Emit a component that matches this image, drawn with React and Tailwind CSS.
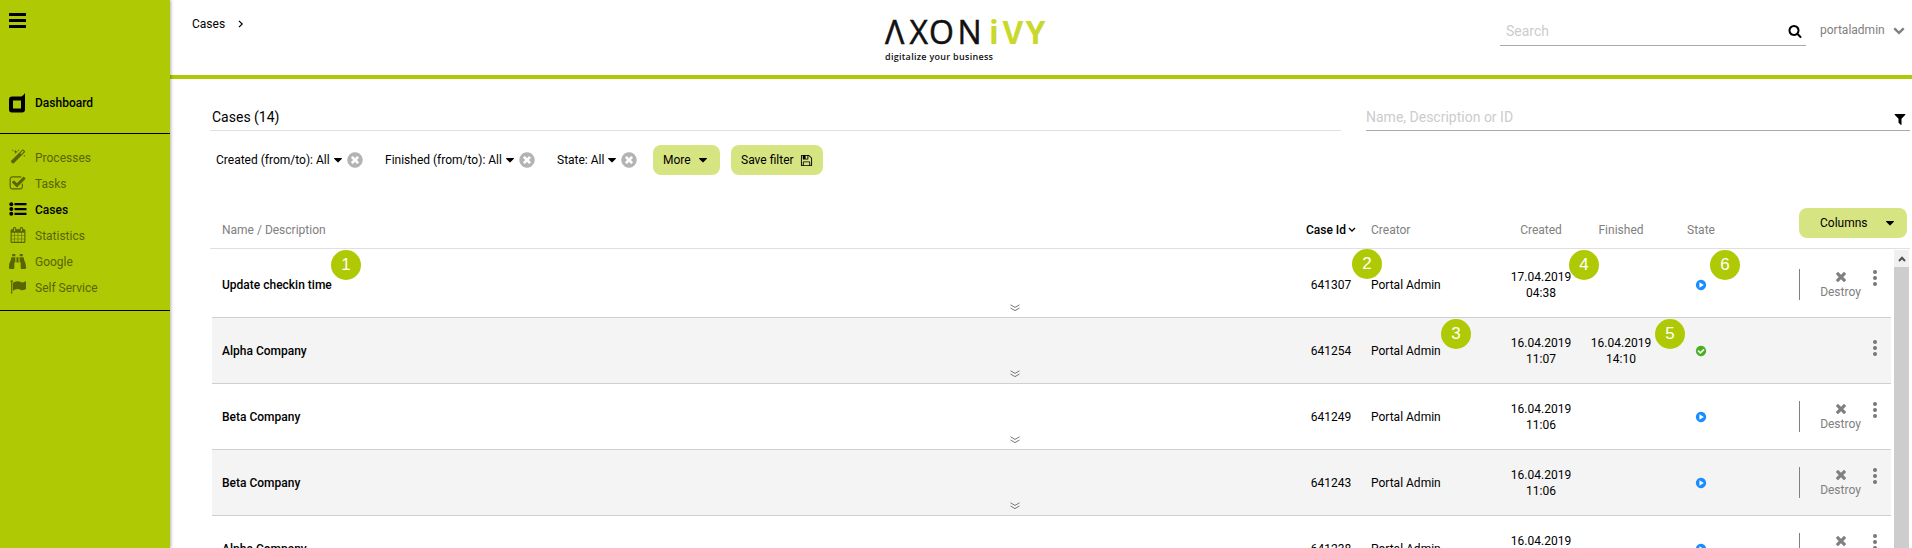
import React from "react";
import { FaBinoculars } from "react-icons/fa";

const CIRCLE =
  "M1664 896q0 209-103 385.5t-279.5 279.5-385.5 103-385.5-103-279.5-279.5-103-385.5 103-385.5 279.5-279.5 385.5-103 385.5 103 279.5 279.5 103 385.5z";

const PATHS = {
  check:
    "M1472 930v318q0 119-84.5 203.5t-203.5 84.5h-832q-119 0-203.5-84.5t-84.5-203.5v-832q0-119 84.5-203.5t203.5-84.5h832q63 0 117 25 15 7 18 23 3 17-9 29l-49 49q-10 10-23 10-3 0-9-2-23-6-45-6h-832q-66 0-113 47t-47 113v832q0 66 47 113t113 47h832q66 0 113-47t47-113v-254q0-13 9-22l64-64q10-10 23-10 6 0 12 3 20 8 20 29zm231-489l-814 814q-24 24-57 24t-57-24l-430-430q-24-24-24-57t24-57l110-110q24-24 57-24t57 24l263 263 647-647q24-24 57-24t57 24l110 110q24 24 24 57t-24 57z",
  calendar:
    "M192 1664h288v-288h-288v288zm352 0h320v-288h-320v288zm-352-352h288v-320h-288v320zm352 0h320v-320h-320v320zm-352-384h288v-288h-288v288zm736 736h320v-288h-320v288zm-384-736h320v-288h-320v288zm768 736h288v-288h-288v288zm-384-352h320v-320h-320v320zm-352-864v-288q0-13-9.5-22.5t-22.5-9.5h-64q-13 0-22.5 9.5t-9.5 22.5v288q0 13 9.5 22.5t22.5 9.5h64q13 0 22.5-9.5t9.5-22.5zm736 864h288v-320h-288v320zm-384-384h320v-288h-320v288zm384 0h288v-288h-288v288zm32-480v-288q0-13-9.5-22.5t-22.5-9.5h-64q-13 0-22.5 9.5t-9.5 22.5v288q0 13 9.5 22.5t22.5 9.5h64q13 0 22.5-9.5t9.5-22.5zm384-64v1280q0 52-38 90t-90 38h-1408q-52 0-90-38t-38-90v-1280q0-52 38-90t90-38h128v-96q0-66 47-113t113-47h64q66 0 113 47t47 113v96h384v-96q0-66 47-113t113-47h64q66 0 113 47t47 113v96h128q52 0 90 38t38 90z",
  times:
    "M1490 1322q0 40-28 68l-136 136q-28 28-68 28t-68-28l-294-294-294 294q-28 28-68 28t-68-28l-136-136q-28-28-28-68t28-68l294-294-294-294q-28-28-28-68t28-68l136-136q28-28 68-28t68 28l294 294 294-294q28-28 68-28t68 28l136 136q28 28 28 68t-28 68l-294 294 294 294q28 28 28 68z",
  timesCircle:
    "M1277 1122q0-26-19-45l-181-181 181-181q19-19 19-45 0-27-19-46l-90-90q-19-19-46-19-26 0-45 19l-181 181-181-181q-19-19-45-19-27 0-46 19l-90 90q-19 19-19 46 0 26 19 45l181 181-181 181q-19 19-19 45 0 27 19 46l90 90q19 19 46 19 26 0 45-19l181-181 181 181q19 19 45 19 27 0 46-19l90-90q19-19 19-46z" + CIRCLE,
  checkCircle:
    "M1412 734q0-28-18-46l-91-90q-19-19-45-19t-45 19l-408 407-226-226q-19-19-45-19t-45 19l-91 90q-18 18-18 46 0 27 18 45l362 362q19 19 45 19 27 0 46-19l543-543q18-18 18-45z" + CIRCLE,
  playCircle: "M660 480l660 416-660 416z" + CIRCLE,
  search:
    "M1216 832q0-185-131.5-316.5t-316.5-131.5-316.5 131.5-131.5 316.5 131.5 316.5 316.5 131.5 316.5-131.5 131.5-316.5zm512 832q0 52-38 90t-90 38q-54 0-90-38l-343-342q-179 124-399 124-143 0-273.5-55.5t-225-150-150-225-55.5-273.5 55.5-273.5 150-225 225-150 273.5-55.5 273.5 55.5 225 150 150 225 55.5 273.5q0 220-124 399l343 343q37 37 37 90z",
  filter:
    "M1595 295q17 41-14 70l-493 493v742q0 42-39 59-13 5-25 5-27 0-45-19l-256-256q-19-19-19-45v-486l-493-493q-31-29-14-70 17-39 59-39h1280q42 0 59 39z",
  floppy:
    "M512 1536h768v-384h-768v384zm896 0h128v-896q0-14-10-38.5t-20-34.5l-281-281q-10-10-34-20t-39-10v416q0 40-28 68t-68 28h-576q-40 0-68-28t-28-68v-416h-128v1280h128v-416q0-40 28-68t68-28h832q40 0 68 28t28 68v416zm-384-928v-320q0-13-9.5-22.5t-22.5-9.5h-192q-13 0-22.5 9.5t-9.5 22.5v320q0 13 9.5 22.5t22.5 9.5h192q13 0 22.5-9.5t9.5-22.5zm640 32v928q0 40-28 68t-68 28h-1344q-40 0-68-28t-28-68v-1344q0-40 28-68t68-28h928q40 0 88 20t76 48l280 280q28 28 48 76t20 88z",
  chevronDown:
    "M1683 808l-742 741q-19 19-45 19t-45-19l-742-741q-19-19-19-45.5t19-45.5l166-165q19-19 45-19t45 19l531 531 531-531q19-19 45-19t45 19l166 165q19 19 19 45.5t-19 45.5z",
  caret:
    "M1408 704q0 26-19 45l-448 448q-19 19-45 19t-45-19l-448-448q-19-19-19-45t19-45 45-19h896q26 0 45 19t19 45z",
  magic:
    "M1254 581l293-293-107-107-293 293zm447-293q0 27-18 45l-1286 1286q-18 18-45 18t-45-18l-198-198q-18-18-18-45t18-45l1286-1286q18-18 45-18t45 18l198 198q18 18 18 45zm-1351-190l98 30-98 30-30 98-30-98-98-30 98-30 30-98zm350 162l196 60-196 60-60 196-60-196-196-60 196-60 60-196zm930 478l98 30-98 30-30 98-30-98-98-30 98-30 30-98zm-640-640l98 30-98 30-30 98-30-98-98-30 98-30 30-98z",
  flag:
    "M320 256q0 72-64 110v1266q0 13-9.5 22.5t-22.5 9.5h-64q-13 0-22.5-9.5t-9.5-22.5v-1266q-64-38-64-110 0-53 37.5-90.5t90.5-37.5 90.5 37.5 37.5 90.5zm1472 64v763q0 25-12.5 38.5t-39.5 27.5q-215 116-369 116-61 0-123.5-22t-108.5-48-115.5-48-142.5-22q-192 0-464 146-17 9-33 9-26 0-45-19t-19-45v-742q0-32 31-55 21-14 79-43 236-120 421-120 107 0 200 29t219 88q38 19 88 19 54 0 117.5-21t110-47 88-47 54.5-21q26 0 45 19t19 45z",
};

function Icon({ name, className }) {
  return (
    <svg viewBox="0 0 1792 1792" fill="currentColor" fillRule="evenodd" className={className}>
      <path d={PATHS[name]} />
    </svg>
  );
}

function ListIcon() {
  return (
    <svg viewBox="0 0 18 14" fill="currentColor" className="h-[14px] w-[18px]">
      <circle cx="2.3" cy="2.2" r="2" />
      <circle cx="2.3" cy="7" r="2" />
      <circle cx="2.3" cy="11.8" r="2" />
      <path d="M5.5 1h12v2.3h-12zM5.5 5.9h12v2.3h-12zM5.5 10.7h12v2.3h-12z" />
    </svg>
  );
}

function DashboardIcon() {
  return (
    <svg viewBox="0 0 16 20" fill="currentColor" fillRule="evenodd" className="h-5 w-4">
      <path d="M16 0v16.500q0 3-3 3H3q-3 0-3-3V6.500q0-3 3-3h9.500Q14.500 2.500 16 0zM4 7.500v8h8v-8z" />
    </svg>
  );
}

const MENU = [
  { label: "Processes", icon: <Icon name="magic" className="ml-px h-4 w-4" /> },
  { label: "Tasks", icon: <Icon name="check" className="h-[17px] w-[17px]" /> },
  { label: "Cases", icon: <ListIcon />, active: true },
  { label: "Statistics", icon: <Icon name="calendar" className="ml-px h-4 w-4" /> },
  { label: "Google", icon: <FaBinoculars className="h-[17px] w-[17px]" /> },
  { label: "Self Service", icon: <Icon name="flag" className="ml-px h-4 w-4" /> },
];

const ROWS = [
  { name: "Update checkin time", id: "641307", created: ["17.04.2019", "04:38"] },
  { name: "Alpha Company", id: "641254", created: ["16.04.2019", "11:07"], finished: ["16.04.2019", "14:10"] },
  { name: "Beta Company", id: "641249", created: ["16.04.2019", "11:06"] },
  { name: "Beta Company", id: "641243", created: ["16.04.2019", "11:06"] },
  { name: "Alpha Company", id: "641238", created: ["16.04.2019", "11:06"] },
];

const BADGES = [
  "left-[331px] top-[250px]",
  "left-[1352px] top-[249px]",
  "left-[1441px] top-[319px]",
  "left-[1569px] top-[250px]",
  "left-[1655px] top-[319px]",
  "left-[1710px] top-[250px]",
];

function Sidebar() {
  return (
    <aside className="z-10 flex w-[170px] shrink-0 flex-col bg-[#afca05] shadow-[1px_0_3px_rgba(0,0,0,0.3)]">
      <div className="flex h-[93px] flex-col gap-[3px] pl-[9px] pt-[13px]">
        <span className="h-[3px] w-[17px] bg-black" />
        <span className="h-[3px] w-[17px] bg-black" />
        <span className="h-[3px] w-[17px] bg-black" />
      </div>
      <div className="flex h-[41px] items-start border-b border-black pl-[9px]">
        <DashboardIcon />
        <span className="ml-[10px] mt-px font-medium leading-[18px]">Dashboard</span>
      </div>
      <nav className="flex h-[177px] flex-col border-b border-black pt-[10px]">
        {MENU.map((item) => (
          <div
            key={item.label}
            className={
              item.active
                ? "flex h-[26px] items-center pl-[9px] font-medium text-black"
                : "flex h-[26px] items-center pl-[9px] text-[#586503]"
            }
          >
            <span className="flex w-[26px] items-center">{item.icon}</span>
            <span className="mt-[2px]">{item.label}</span>
          </div>
        ))}
      </nav>
    </aside>
  );
}

function Header() {
  return (
    <header className="flex h-[79px] shrink-0 items-start border-b-4 border-[#afca05]">
      <div className="flex w-[715px] items-center pl-[22px] pt-[15px] leading-[18px]">
        Cases
        <svg viewBox="0 0 6 8" className="ml-[13px] h-2 w-[6px] fill-none stroke-black stroke-[1.2]">
          <path d="M1 0.800l3.200 3.200-3.200 3.200" />
        </svg>
      </div>
      <svg viewBox="0 0 162 44" className="mt-[19px] h-11 w-[162px] shrink-0 overflow-visible">
        <g className="[font-family:'Open_Sans','Noto_Sans',sans-serif]">
          <text x="0 24.5 44 72.5" y="25" fontSize="32" fill="#111" stroke="#111" strokeWidth="0.5">ΛXON</text>
          <text x="104 117.5 140.500" y="25" fontSize="32" fontWeight="700" fill="#c8d92b">iVY</text>
          <text x="0" y="41" fontSize="9" fontWeight="600" textLength="108" fill="#111">digitalize your business</text>
        </g>
      </svg>
      <div className="ml-[453px] mt-[15px] flex h-[31px] w-[306px] items-center border-b border-[#aaa] pl-[6px] pt-px text-sm text-[#ccc]">
        <span>Search</span>
        <Icon name="search" className="ml-auto mr-1 h-[14px] w-[14px] text-black" />
      </div>
      <div className="ml-[14px] mt-[21px] flex items-center leading-[18px] text-[#808080]">
        portaladmin
        <Icon name="chevronDown" className="ml-2 h-3 w-3" />
      </div>
    </header>
  );
}

function FilterItem({ label, className }) {
  return (
    <div className={"flex items-center " + className}>
      <span>{label}</span>
      <Icon name="caret" className="ml-px h-[14px] w-[14px]" />
      <Icon name="timesCircle" className="ml-px h-[18px] w-[18px] text-[#b3b3b3]" />
    </div>
  );
}

function Stack({ lines }) {
  return (
    <div className="flex w-20 flex-col pt-px text-center leading-4">
      {lines && lines.map((line) => <span key={line}>{line}</span>)}
    </div>
  );
}

function Row({ row, striped }) {
  return (
    <div
      className={
        striped
          ? "relative flex h-[66px] shrink-0 items-center border-b border-[#d0d0d0] bg-[#f4f4f4] pl-[10px]"
          : "relative flex h-[66px] shrink-0 items-center border-b border-[#d0d0d0] pl-[10px]"
      }
    >
      <span className="flex-1 pt-px font-medium">{row.name}</span>
      <span className="w-20 pt-px text-center">{row.id}</span>
      <span className="w-[130px] pt-px">Portal Admin</span>
      <Stack lines={row.created} />
      <Stack lines={row.finished} />
      <span className="flex w-20 justify-center pt-px">
        {row.finished ? (
          <Icon name="checkCircle" className="h-3 w-3 text-[#46b01e]" />
        ) : (
          <Icon name="playCircle" className="h-3 w-3 text-[#1a8cff]" />
        )}
      </span>
      <div className="flex h-full w-[150px] items-start pl-[58px]">
        {row.finished ? (
          <span className="w-[74px]" />
        ) : (
          <div className="mt-[17px] flex h-[31px] w-[74px] flex-col items-center border-l border-[#808080] pl-2 text-[#808080]">
            <Icon name="times" className="h-4 w-4" />
            <span className="leading-4">Destroy</span>
          </div>
        )}
        <div className={row.finished ? "mt-[22px] flex w-1 flex-col gap-[2px]" : "mt-[18px] flex w-1 flex-col gap-[2px]"}>
          <span className="h-1 w-1 rounded-full bg-[#777]" />
          <span className="h-1 w-1 rounded-full bg-[#777]" />
          <span className="h-1 w-1 rounded-full bg-[#777]" />
        </div>
      </div>
      <svg viewBox="0 0 10 8" className="absolute left-[798px] top-[52px] h-2 w-[10px] fill-none stroke-[#777] stroke-1">
        <path d="M0.500 0.800l4.500 2.600 4.500-2.600M0.500 4l4.500 2.600 4.500-2.600" />
      </svg>
    </div>
  );
}

export default function App() {
  return (
    <div className="relative flex h-[548px] w-[1912px] overflow-hidden bg-white text-xs text-black [font-family:Roboto,sans-serif]">
      <Sidebar />
      <div className="flex flex-1 flex-col">
        <Header />
        <main className="flex flex-1 flex-col overflow-hidden">
          <div className="flex h-[52px] pl-10 pr-[2px] text-sm">
            <div className="flex h-full w-[1131px] items-end border-b border-[#e0e0e0] pb-[3px] pl-[2px]">Cases (14)</div>
            <div className="ml-[25px] flex h-full flex-1 items-end border-b border-[#aaa] pb-[3px] text-[#ccc]">
              Name, Description or ID
              <Icon name="filter" className="mb-px ml-auto mr-[3px] h-[14px] w-[14px] text-black" />
            </div>
          </div>
          <div className="flex h-[58px] items-center pl-[46px]">
            <FilterItem label="Created (from/to): All" className="w-[169px]" />
            <FilterItem label="Finished (from/to): All" className="w-[172px]" />
            <FilterItem label="State: All" className="w-[96px]" />
            <button className="flex h-[30px] w-[67px] items-center rounded-lg bg-[#d7e482] pl-[10px]">
              More
              <Icon name="caret" className="ml-[5px] h-[14px] w-[14px]" />
            </button>
            <button className="ml-[11px] flex h-[30px] w-[92px] items-center rounded-lg bg-[#d7e482] pl-[10px]">
              Save filter
              <Icon name="floppy" className="ml-[6px] h-[13px] w-[13px]" />
            </button>
          </div>
          <div className="ml-10 mr-[2px] flex h-[60px] items-end border-b border-[#e0e0e0] pb-[10px] pl-3 text-[#808080]">
            <span className="flex-1">Name / Description</span>
            <span className="flex w-20 items-center justify-center font-medium text-black">
              Case Id
              <svg viewBox="0 0 8 6" className="ml-[2px] h-[6px] w-2 fill-none stroke-black stroke-[1.3]">
                <path d="M1 1l3 3 3-3" />
              </svg>
            </span>
            <span className="w-[130px]">Creator</span>
            <span className="w-20 text-center">Created</span>
            <span className="w-20 text-center">Finished</span>
            <span className="w-20 text-center">State</span>
            <div className="flex w-[169px] justify-end pr-[3px]">
              <button className="flex h-[30px] w-[108px] items-center rounded-lg bg-[#d7e482] pl-[21px] text-black">
                Columns
                <Icon name="caret" className="ml-auto mr-[10px] h-[14px] w-[14px]" />
              </button>
            </div>
          </div>
          <div className="flex flex-1 overflow-hidden pl-[42px] pt-px">
            <div className="mt-[2px] flex w-[1679px] flex-col overflow-hidden">
              {ROWS.map((row, i) => (
                <Row key={row.id} row={row} striped={i % 2 === 1} />
              ))}
            </div>
            <div className="ml-[3px] flex w-[15px] flex-col bg-[#cdcdcd]">
              <div className="flex h-[17px] items-center justify-center bg-[#f0f0f0]">
                <svg viewBox="0 0 8 6" className="h-[6px] w-2 fill-none stroke-[#505050] stroke-2">
                  <path d="M1 5l3-3.200 3 3.200" />
                </svg>
              </div>
            </div>
          </div>
        </main>
      </div>
      {BADGES.map((place, i) => (
        <span
          key={place}
          className={
            "absolute z-20 flex h-[30px] w-[30px] items-center justify-center rounded-full bg-[#afca05] text-[17px] text-white [font-family:'Liberation_Sans',sans-serif] " +
            place
          }
        >
          {i + 1}
        </span>
      ))}
    </div>
  );
}
